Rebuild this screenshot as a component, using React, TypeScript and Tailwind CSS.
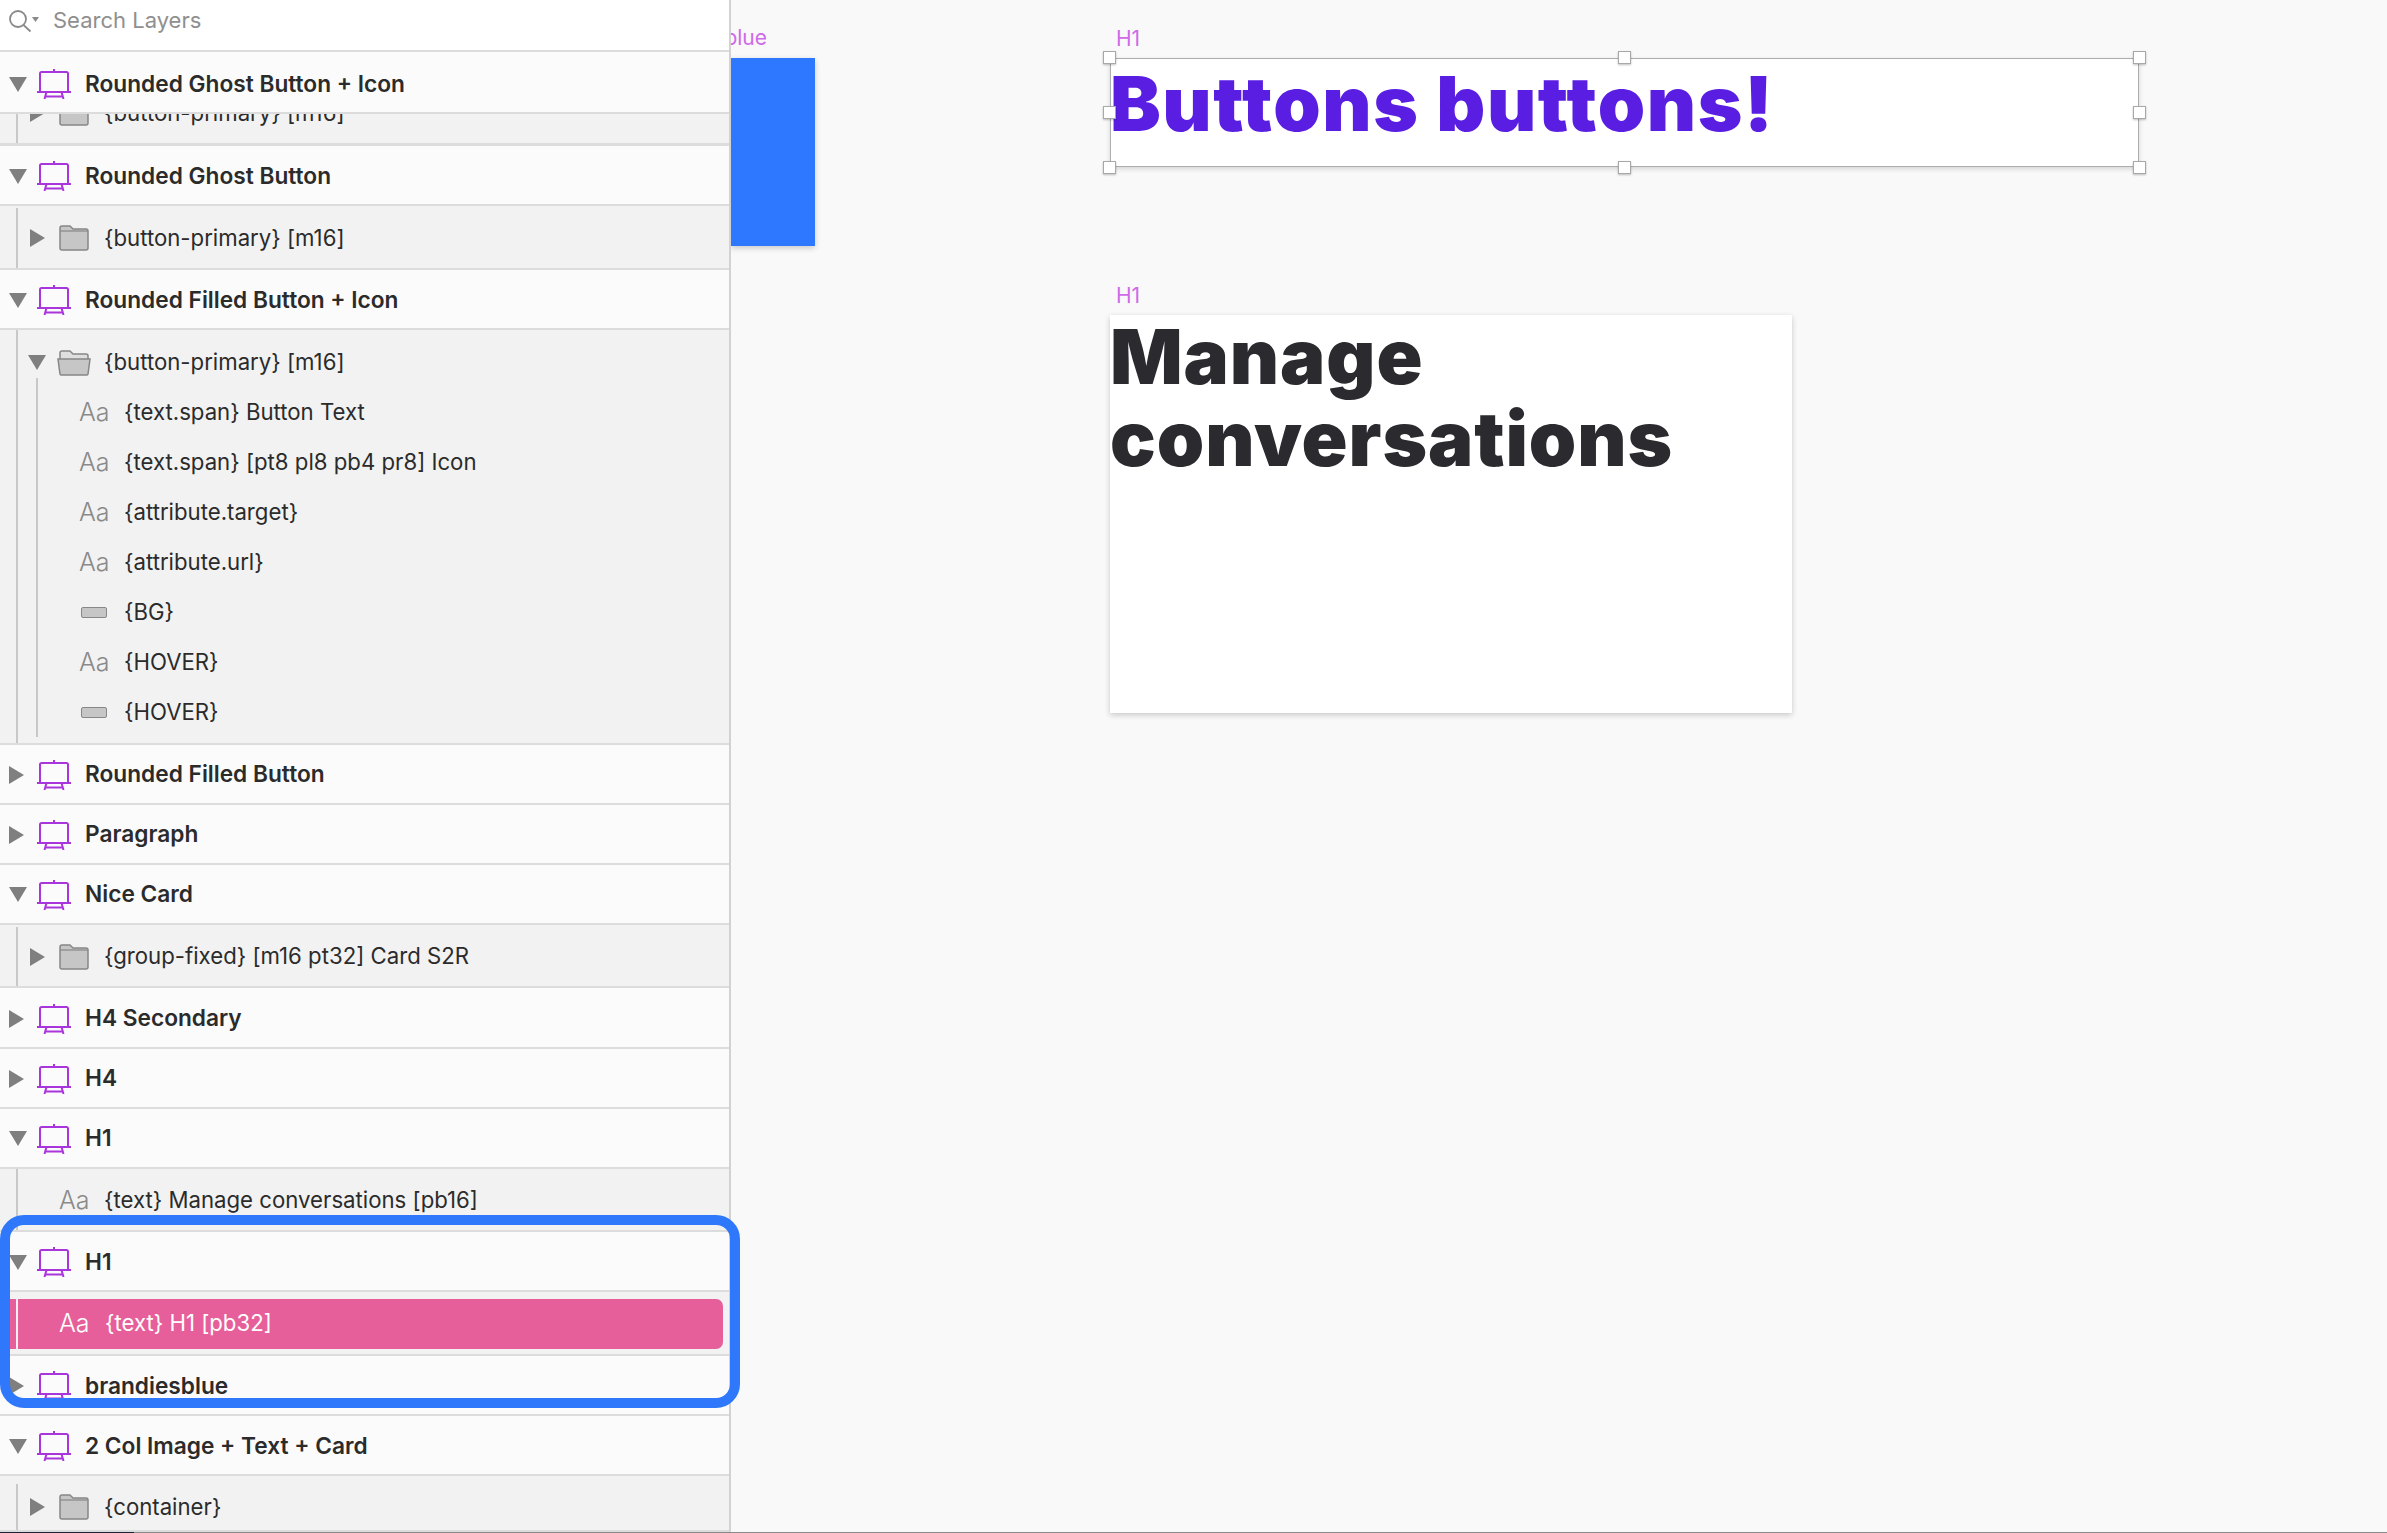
import React from 'react';

const font = "font-['Inter','Liberation_Sans',sans-serif]";

function TriDown({ className = '' }: { className?: string }) {
  return (
    <svg width="18" height="15" viewBox="0 0 18 15" className={className}>
      <path d="M0 0h18L9 15z" fill="#7f7f7f" />
    </svg>
  );
}

function TriRight({ className = '' }: { className?: string }) {
  return (
    <svg width="15" height="18" viewBox="0 0 15 18" className={className}>
      <path d="M0 0l15 9L0 18z" fill="#7f7f7f" />
    </svg>
  );
}

function Artboard() {
  return (
    <svg width="34" height="30" viewBox="0 0 34 30" fill="none" stroke="#a935dc" strokeWidth="2" className="shrink-0">
      <path d="M17 0v3M3 23V4.500A1.500 1.500 0 0 1 4.500 3h25A1.500 1.500 0 0 1 31 4.500V23M0 23h34M9.500 23L7.500 30M24.500 23l2 7M8 27.500h18" />
    </svg>
  );
}

function Folder() {
  return (
    <svg width="30" height="26" viewBox="0 0 30 26" className="shrink-0">
      <path
        d="M1 3a2 2 0 0 1 2-2h8l3 3h13a2 2 0 0 1 2 2v17a2 2 0 0 1-2 2H3a2 2 0 0 1-2-2z"
        fill="#c6c6c6"
        stroke="#878787"
        strokeWidth="1.500"
      />
      <path d="M1 6h28" stroke="#878787" strokeWidth="1.200" />
    </svg>
  );
}

function FolderOpen() {
  return (
    <svg width="34" height="26" viewBox="0 0 34 26" className="shrink-0">
      <path
        d="M3 9V3a2 2 0 0 1 2-2h8l3 3h13a2 2 0 0 1 2 2v3"
        fill="#dedede"
        stroke="#878787"
        strokeWidth="1.500"
      />
      <path
        d="M1 9h32l-2 15a1.500 1.500 0 0 1-1.500 1h-25A1.500 1.500 0 0 1 3 24z"
        fill="#c6c6c6"
        stroke="#878787"
        strokeWidth="1.500"
      />
    </svg>
  );
}

function Header({ label, open, className }: { label: string; open?: boolean; className: string }) {
  return (
    <div className={`flex items-center shrink-0 border-b-2 border-[#dcdcdc] bg-[#fbfbfb] ${className}`}>
      <div className="flex justify-center w-[37px]">
        {open ? <TriDown className="-ml-[2px]" /> : <TriRight className="-ml-[4px]" />}
      </div>
      <Artboard />
      <span className="ml-[14px] text-[22.700px] font-semibold leading-none text-[#2b2b2b] whitespace-nowrap">{label}</span>
    </div>
  );
}

function GroupRow({ label, className }: { label: string; className: string }) {
  return (
    <div className={`flex items-center shrink-0 border-b-2 border-[#dcdcdc] bg-[#f2f2f2] ${className}`}>
      <div className="self-stretch w-[2px] ml-[16px] bg-[#c8c8c8]" />
      <TriRight className="ml-[12px]" />
      <div className="ml-[14px]">
        <Folder />
      </div>
      <span className="ml-[15px] text-[22.200px] leading-none text-[#2b2b2b] whitespace-nowrap">{label}</span>
    </div>
  );
}

function TextRow({ label }: { label: string }) {
  return (
    <div className="flex items-center shrink-0 h-[63px] pt-[2px] border-b-2 border-[#dcdcdc] bg-[#f2f2f2]">
      <div className="self-stretch w-[2px] ml-[16px] -mt-[2px] bg-[#c8c8c8]" />
      <span className="ml-[41px] w-[45px] text-[25px] font-light leading-none text-[#8a8a8a]">Aa</span>
      <span className="text-[22.200px] leading-none text-[#2b2b2b] whitespace-nowrap">{label}</span>
    </div>
  );
}

function LeafRow({ label, rect }: { label: string; rect?: boolean }) {
  return (
    <div className="flex items-center h-[50px]">
      {rect ? (
        <div className="ml-[63px] mr-[17px] w-[26px] h-[11px] rounded-[2px] border-[1.500px] border-[#878787] bg-[#c6c6c6]" />
      ) : (
        <span className="ml-[61px] w-[45px] text-[25px] font-light leading-none text-[#8a8a8a]">Aa</span>
      )}
      <span className="text-[22.200px] leading-none text-[#2b2b2b] whitespace-nowrap">{label}</span>
    </div>
  );
}

function OpenGroup() {
  return (
    <div className="flex shrink-0 h-[415px] border-b-2 border-[#dcdcdc] bg-[#f2f2f2]">
      <div className="w-[2px] ml-[16px] bg-[#c8c8c8]" />
      <div className="flex-1 relative">
        <div className="flex items-center h-[64px] pt-[1px]">
          <TriDown className="ml-[10px]" />
          <div className="ml-[11px]">
            <FolderOpen />
          </div>
          <span className="ml-[13px] text-[22.200px] leading-none text-[#2b2b2b] whitespace-nowrap">
            {'{button-primary} [m16]'}
          </span>
        </div>
        <div className="absolute left-[18px] top-[48px] bottom-[6px] w-[2px] bg-[#c8c8c8]" />
        <div className="flex flex-col -mt-[7px]">
          <LeafRow label="{text.span} Button Text" />
          <LeafRow label="{text.span} [pt8 pl8 pb4 pr8] Icon" />
          <LeafRow label="{attribute.target}" />
          <LeafRow label="{attribute.url}" />
          <LeafRow label="{BG}" rect />
          <LeafRow label="{HOVER}" />
          <LeafRow label="{HOVER}" rect />
        </div>
      </div>
    </div>
  );
}

function Handle({ className }: { className: string }) {
  return (
    <div
      className={`absolute w-[13px] h-[13px] bg-white border border-[#a8a8a8] shadow-[0_1px_2px_rgba(0,0,0,0.25)] ${className}`}
    />
  );
}

export default function App() {
  return (
    <div className={`relative flex w-full h-[1533px] overflow-hidden bg-[#f9f9f9] ${font}`}>
      <aside className="relative flex flex-col w-[731px] shrink-0 border-r-2 border-[#d2d2d2] overflow-hidden">
        <div className="flex items-center shrink-0 h-[52px] pb-[10px] border-b-2 border-[#dcdcdc] bg-white">
          <svg width="40" height="24" viewBox="0 0 40 24" fill="none" className="ml-[8px] mt-[2px] shrink-0">
            <circle cx="10" cy="10" r="8" stroke="#8a8a8a" strokeWidth="1.800" />
            <path d="M15.500 16l7 6.500" stroke="#8a8a8a" strokeWidth="1.800" />
            <path d="M24 8h7l-3.500 5z" fill="#8a8a8a" />
          </svg>
          <span className="ml-[5px] text-[22px] leading-none text-[#8f8f8f]">Search Layers</span>
        </div>

        <Header label="Rounded Ghost Button + Icon" open className="h-[62px] pt-[4px]" />
        <div className="flex shrink-0 h-[32px] overflow-hidden border-b-2 border-[#dcdcdc] bg-[#f2f2f2]">
          <div className="-mt-[31px] w-full">
            <GroupRow label="{button-primary} [m16]" className="h-[62px] border-b-0" />
          </div>
        </div>
        <Header label="Rounded Ghost Button" open className="h-[60px] pt-[2px]" />
        <GroupRow label="{button-primary} [m16]" className="h-[64px] pt-[2px]" />
        <Header label="Rounded Filled Button + Icon" open className="h-[60px] pt-[2px]" />
        <OpenGroup />
        <Header label="Rounded Filled Button" className="h-[60px] pt-[1px]" />
        <Header label="Paragraph" className="h-[60px] pt-[1px]" />
        <Header label="Nice Card" open className="h-[60px] pt-[1px]" />
        <GroupRow label="{group-fixed} [m16 pt32] Card S2R" className="h-[63px] pt-[2px]" />
        <Header label="H4 Secondary" className="h-[61px] pt-[2px]" />
        <Header label="H4" className="h-[60px] pt-[1px]" />
        <Header label="H1" open className="h-[60px] pt-[1px]" />
        <TextRow label="{text} Manage conversations [pb16]" />
        <Header label="H1" open className="h-[60px] pt-[2px]" />
        <div className="relative flex items-center shrink-0 h-[64px] border-b-2 border-[#dcdcdc] bg-[#f2f2f2]">
          <div className="flex items-center w-[723px] h-[50px] mt-[1px] rounded-r-[7px] bg-[#e75f9a]">
            <span className="ml-[59px] w-[46px] text-[25px] font-light leading-none text-white">Aa</span>
            <span className="text-[22.200px] leading-none text-white whitespace-nowrap">{'{text} H1 [pb32]'}</span>
          </div>
          <div className="absolute left-[16px] top-0 bottom-0 w-[2px] bg-[#f7f0f3]" />
        </div>
        <Header label="brandiesblue" className="h-[60px] pt-[2px]" />
        <Header label="2 Col Image + Text + Card" open className="h-[60px] pt-[2px]" />
        <GroupRow label="{container}" className="h-[56px] border-b-0 pt-[8px]" />
      </aside>

      <main className="relative flex-1 overflow-hidden">
        <span className="absolute right-[1620px] top-[27px] text-[21px] leading-none text-[#cf6ae8] whitespace-nowrap">
          brandiesblue
        </span>
        <div className="absolute left-0 top-[58px] w-[84px] h-[188px] bg-[#2e77ff] shadow-[0_2px_6px_rgba(0,0,0,0.2)]" />

        <span className="absolute left-[385px] top-[28px] text-[21px] leading-none text-[#cf6ae8]">H1</span>
        <div className="absolute left-[379px] top-[58px] w-[1029px] h-[109px] bg-white border-[1.500px] border-[#adadad] shadow-[0_2px_5px_rgba(0,0,0,0.15)]">
          <div className="mt-[3px] ml-[-1px] text-[76px] font-black leading-[82px] tracking-[1.600px] text-[#5a1ee3] whitespace-nowrap">
            Buttons buttons!
          </div>
          <Handle className="-left-[8px] -top-[8px]" />
          <Handle className="left-[507px] -top-[8px]" />
          <Handle className="-right-[8px] -top-[8px]" />
          <Handle className="-left-[8px] top-[47px]" />
          <Handle className="-right-[8px] top-[47px]" />
          <Handle className="-left-[8px] -bottom-[8px]" />
          <Handle className="left-[507px] -bottom-[8px]" />
          <Handle className="-right-[8px] -bottom-[8px]" />
        </div>

        <span className="absolute left-[385px] top-[285px] text-[21px] leading-none text-[#cf6ae8]">H1</span>
        <div className="absolute left-[379px] top-[315px] w-[682px] h-[398px] bg-white shadow-[0_2px_6px_rgba(0,0,0,0.2)]">
          <div className="text-[76px] font-black leading-[82px] tracking-[0.900px] text-[#2b2a2f]">
            Manage
            <br />
            conversations
          </div>
        </div>
      </main>

      <div className="absolute left-0 top-[1215px] w-[740px] h-[193px] rounded-[24px] border-[10px] border-[#2f78fb]" />
      <div className="absolute left-0 bottom-0 w-full h-[1px] bg-[#8a8a8a]" />
      <div className="absolute left-0 bottom-0 w-[134px] h-[1px] bg-[#1a2233]" />
    </div>
  );
}
